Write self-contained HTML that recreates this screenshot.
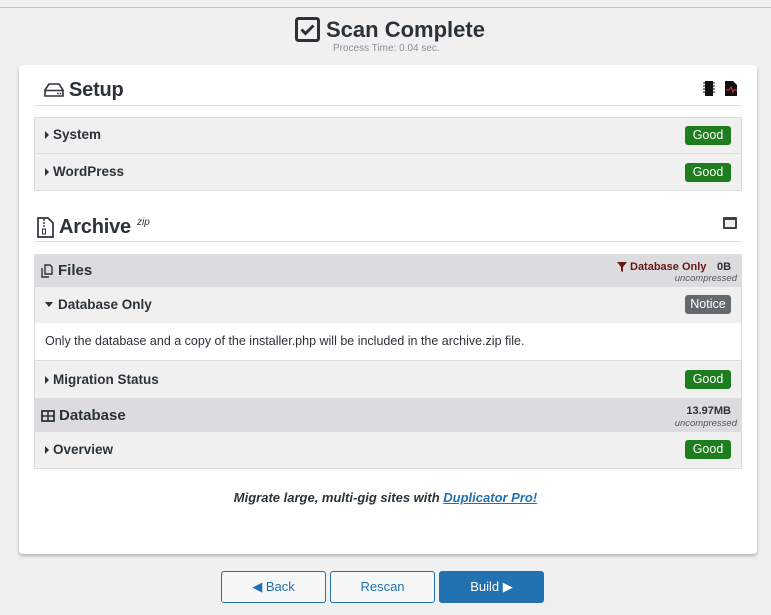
<!DOCTYPE html>
<html><head><meta charset="utf-8"><style>
*{box-sizing:border-box;margin:0;padding:0}
body{width:771px;height:615px;background:#f0f0f1;font-family:"Liberation Sans",sans-serif;color:#2c3338;position:relative;overflow:hidden}
.abs{position:absolute}
.topline{left:0;top:7px;width:771px;height:1px;background:#c3c4c7}
.card{left:19px;top:65px;width:738px;height:489px;background:#fff;border-radius:4px;box-shadow:0 2px 3px rgba(0,0,0,.25)}
h2{position:absolute;font-size:20px;font-weight:bold;color:#2c3338;letter-spacing:-0.2px}
.hr{position:absolute;left:34px;width:707px;height:1px;background:#dcdcde}
.row{position:absolute;left:34px;width:708px;background:#f0f0f1;border:1px solid #dcdcde;font-size:13.5px;font-weight:bold;color:#2c3338}
.row span.t{position:absolute;left:18px}
.row .ar{position:absolute;left:10px;width:0;height:0;border-top:4px solid transparent;border-bottom:4px solid transparent;border-left:4px solid #2c3338}
.badge{position:absolute;right:10px;width:46px;height:19px;border-radius:3px;background:#1e7d1e;color:#fff;font-size:12.5px;font-weight:normal;text-align:center;line-height:19px}
.sec{position:absolute;left:34px;width:708px;background:#dcdcde;font-size:15px;font-weight:bold}
.btn{position:absolute;top:571px;height:32px;width:105px;border:1px solid #2271b1;border-radius:3px;background:#f6f7f7;color:#2271b1;font-size:13px;text-align:center;line-height:30px}
</style></head><body>
<div class="abs topline"></div>
<svg class="abs" style="left:295px;top:17px" width="25" height="25" viewBox="0 0 25 25"><rect x="1.5" y="1.5" width="22" height="22" rx="2" fill="none" stroke="#2c3338" stroke-width="3"/><path d="M6.5 12.5l4 4 8-8" fill="none" stroke="#2c3338" stroke-width="3"/></svg>
<div class="abs" style="left:326px;top:17px;font-size:22px;font-weight:bold;color:#2c3338">Scan Complete</div>
<div class="abs" style="left:333px;top:43px;font-size:10px;color:#8c8f94">Process Time: 0.04 sec.</div>
<div class="abs card"></div>
<svg class="abs" style="left:43px;top:82px" width="22" height="16" viewBox="0 0 22 16"><path d="M2 8l4-6h10l4 6v6H2z" fill="none" stroke="#2c3338" stroke-width="1.6"/><line x1="2" y1="8.5" x2="20" y2="8.5" stroke="#2c3338" stroke-width="1.4"/><circle cx="15" cy="11.5" r=".9" fill="#2c3338"/><circle cx="17.5" cy="11.5" r=".9" fill="#2c3338"/></svg>
<h2 style="left:69px;top:79px">Setup</h2>
<svg class="abs" style="left:703px;top:81px" width="12" height="15" viewBox="0 0 12 15"><rect x="2" y="0" width="8" height="15" fill="#111"/><path d="M0 2h2M0 5h2M0 8h2M0 11h2M10 2h2M10 5h2M10 8h2M10 11h2" stroke="#111"/></svg>
<svg class="abs" style="left:725px;top:81px" width="12" height="15" viewBox="0 0 12 15"><path d="M0 0h8l4 4v11H0z" fill="#111"/><path d="M1 9h3l2-3 2 5 1-2h3" stroke="#e33" fill="none"/></svg>
<div class="hr" style="top:105px"></div>
<div class="row" style="top:117px;height:74px"><i class="ar" style="top:13px"></i><span class="t" style="top:9px">System</span><span class="badge" style="top:8px">Good</span>
<div style="position:absolute;left:0;right:0;top:35px;height:1px;background:#dcdcde"></div>
<i class="ar" style="top:50px"></i><span class="t" style="top:46px">WordPress</span><span class="badge" style="top:45px">Good</span></div>
<svg class="abs" style="left:37px;top:217px" width="17" height="21" viewBox="0 0 17 21"><path d="M1 1h10l5 5v14H1z" fill="none" stroke="#2c3338" stroke-width="1.7"/><path d="M7 2v2M7 5v2M7 8v2" stroke="#2c3338" stroke-width="1.4"/><rect x="5.5" y="12" width="3" height="5" fill="none" stroke="#2c3338"/></svg>
<h2 style="left:59px;top:216px">Archive</h2>
<div class="abs" style="left:137px;top:217px;font-size:10px;font-style:italic">zip</div>
<div class="abs" style="left:723px;top:217px;width:14px;height:12px;background:#3c434a;border-radius:1px"><div style="margin:3px 2px 0;height:7px;background:#f0f0f1"></div></div>
<div class="hr" style="top:241px"></div>
<div class="abs" style="left:34px;top:254px;width:708px;height:215px;border:1px solid #dcdcde;background:#f0f0f1"></div>
<div class="sec" style="top:254px;height:33px;border-radius:3px 3px 0 0"><svg class="abs" style="left:7px;top:10px" width="12" height="14" viewBox="0 0 12 14"><path d="M1 4v9h7M4 1h5l2 2v7H4z" fill="none" stroke="#2c3338" stroke-width="1.4"/></svg><span class="abs" style="left:24px;top:8px">Files</span>
<svg class="abs" style="left:583px;top:8px" width="10" height="10" viewBox="0 0 10 10"><path d="M0 0h10L6 5v5L4 9V5z" fill="#6b1616"/></svg>
<span class="abs" style="left:596px;top:7px;font-size:11px;color:#6b1616">Database Only</span><span class="abs" style="left:683px;top:7px;font-size:11px">0B</span>
<span class="abs" style="right:5px;top:19px;font-size:9.5px;font-weight:normal;font-style:italic;color:#50575e">uncompressed</span></div>
<div class="row" style="top:287px;height:36px;border:none;left:35px;width:706px"><i style="position:absolute;left:10px;top:15px;border-left:4px solid transparent;border-right:4px solid transparent;border-top:5px solid #2c3338"></i><span class="t" style="left:23px;top:10px">Database Only</span><span class="badge" style="top:8px;background:#646970;width:46px">Notice</span></div>
<div class="abs" style="left:35px;top:323px;width:706px;height:38px;background:#fff;border-bottom:1px solid #dcdcde;font-size:12.5px;padding:11px 0 0 10px;color:#2c3338">Only the database and a copy of the installer.php will be included in the archive.zip file.</div>
<div class="row" style="top:362px;height:36px;border:none;left:35px;width:706px"><i class="ar" style="top:14px"></i><span class="t" style="top:10px">Migration Status</span><span class="badge" style="top:8px">Good</span></div>
<div class="sec" style="top:398px;height:34px"><svg class="abs" style="left:7px;top:12px" width="14" height="12" viewBox="0 0 14 12"><rect x="1" y="1" width="12" height="10" fill="none" stroke="#2c3338" stroke-width="1.8"/><path d="M1 6h12M7 1v10" stroke="#2c3338" stroke-width="1.6"/></svg><span class="abs" style="left:25px;top:9px">Database</span>
<span class="abs" style="right:11px;top:7px;font-size:11px">13.97MB</span>
<span class="abs" style="right:5px;top:20px;font-size:9.5px;font-weight:normal;font-style:italic;color:#50575e">uncompressed</span></div>
<div class="row" style="top:432px;height:36px;border:none;left:35px;width:706px"><i class="ar" style="top:14px"></i><span class="t" style="top:10px">Overview</span><span class="badge" style="top:8px">Good</span></div>
<div class="abs" style="left:0;width:771px;top:490px;text-align:center;font-size:13px;font-weight:bold;font-style:italic;color:#2c3338">Migrate large, multi-gig sites with <span style="color:#2271b1;text-decoration:underline">Duplicator Pro!</span></div>
<div class="btn" style="left:221px">&#9664; Back</div>
<div class="btn" style="left:330px">Rescan</div>
<div class="btn" style="left:439px;background:#2271b1;color:#fff">Build &#9654;</div>
</body></html>
